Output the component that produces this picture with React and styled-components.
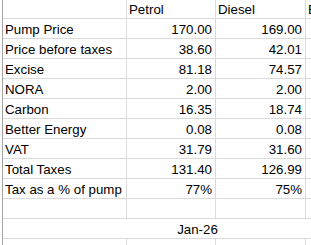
import React from "react";
import styled, { createGlobalStyle } from "styled-components";

const GlobalStyle = createGlobalStyle`
  html, body {
    margin: 0;
    padding: 0;
    background: #fff;
  }
  body {
    font-family: "Liberation Sans", Arial, sans-serif;
  }
`;

const Viewport = styled.div`
  width: 311px;
  height: 245px;
  overflow: hidden;
  padding-left: 2px;
  box-sizing: border-box;
  background: #fff;
`;

const Sheet = styled.div`
  display: grid;
  grid-template-columns: 124px 89px 90px 86px;
  width: 389px;
  border-left: 1px solid #a3a3a3;
  font-size: 13.3px;
  color: #000;
`;

const Cell = styled.div`
  box-sizing: border-box;
  height: ${({ $head }) => ($head ? "19px" : "20px")};
  border-right: ${({ $merged }) => ($merged ? "none" : "1px solid #dadada")};
  border-bottom: 1px solid #dadada;
  padding: 0 ${({ $num }) => ($num ? "3px" : "2px")} 1px 2px;
  display: flex;
  align-items: flex-end;
  justify-content: ${({ $num, $merged }) =>
    $merged ? "center" : $num ? "flex-end" : "flex-start"};
  line-height: 15px;
  white-space: nowrap;
  overflow: hidden;
  grid-column: ${({ $merged }) => ($merged ? "1 / -1" : "auto")};
`;

const rows = [
  ["Pump Price", "170.00", "169.00"],
  ["Price before taxes", "38.60", "42.01"],
  ["Excise", "81.18", "74.57"],
  ["NORA", "2.00", "2.00"],
  ["Carbon", "16.35", "18.74"],
  ["Better Energy", "0.08", "0.08"],
  ["VAT", "31.79", "31.60"],
  ["Total Taxes", "131.40", "126.99"],
  ["Tax as a % of pump", "77%", "75%"],
];

export default function App() {
  return (
    <>
      <GlobalStyle />
      <Viewport>
        <Sheet>
          <Cell $head />
          <Cell $head>Petrol</Cell>
          <Cell $head>Diesel</Cell>
          <Cell $head>E10</Cell>

          {rows.map(([label, petrol, diesel]) => (
            <React.Fragment key={label}>
              <Cell>{label}</Cell>
              <Cell $num>{petrol}</Cell>
              <Cell $num>{diesel}</Cell>
              <Cell />
            </React.Fragment>
          ))}

          <Cell />
          <Cell />
          <Cell />
          <Cell />

          <Cell $merged>Jan-26</Cell>

          <Cell />
          <Cell />
          <Cell />
          <Cell />
        </Sheet>
      </Viewport>
    </>
  );
}
